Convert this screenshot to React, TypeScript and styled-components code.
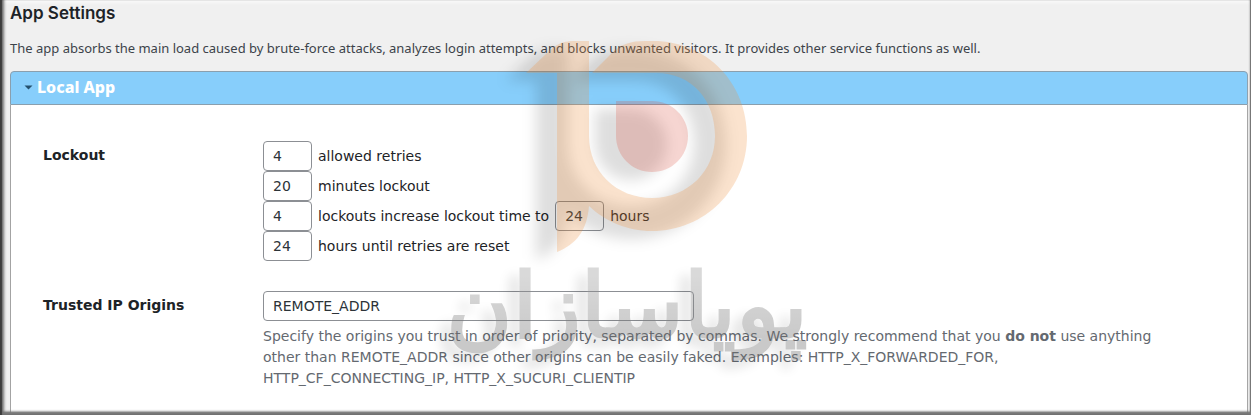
import React, { useState } from "react";
import styled, { createGlobalStyle } from "styled-components";

const GlobalStyle = createGlobalStyle`
  *, *::before, *::after { box-sizing: border-box; }
  body {
    margin: 0;
    background: #f0f0f0;
    color: #1d2327;
    font-family: "DejaVu Sans", sans-serif;
    font-size: 14px;
  }
`;

const Page = styled.main`
  position: relative;
  display: flex;
  flex-direction: column;
  min-height: 100vh;
  padding: 0 3px 0 10px;
  overflow: hidden;
`;

const Frame = styled.div`
  position: absolute;
  inset: 0;
  pointer-events: none;
  border-right: 1px solid #777;
  box-shadow:
    inset 2px 0 1px #3c3c3c,
    inset 0 -3px 2px #777,
    inset 4px -3px 3px #6f6f6f,
    inset 0 3px 3px #f8f8f8;
`;

const Title = styled.h1`
  margin: 3px 0 0;
  font: 600 17px/20px Inter, sans-serif;
`;

const Intro = styled.p`
  margin: 15px 0 12px;
  color: #3c434a;
  font: 400 13px/21px "Noto Sans", sans-serif;
`;

const Panel = styled.section`
  flex: 1;
  display: flex;
  flex-direction: column;
`;

const PanelHeading = styled.h2`
  margin: 0;
  font-size: 14px;
`;

const PanelToggle = styled.button`
  display: flex;
  align-items: center;
  gap: 4px;
  width: 100%;
  height: 34px;
  padding: 0 13px 2px;
  border: 1px solid #8a9fae;
  border-radius: 4px 4px 0 0;
  background: #87cefb;
  color: #fff;
  font: 800 16px/20px "Noto Sans", sans-serif;
  text-align: left;
  cursor: pointer;
`;

const Caret = styled.svg`
  width: 9px;
  height: 5px;
  fill: #24506e;
`;

const PanelBody = styled.form`
  flex: 1;
  display: flex;
  flex-direction: column;
  gap: 30px;
  padding: 36px 80px 26px 32px;
  border: 1px solid #a3a3a3;
  border-top: 0;
  border-bottom: 0;
  background: #fff;
`;

const SettingRow = styled.div`
  display: grid;
  grid-template-columns: 220px minmax(0, 1fr);
`;

const SettingName = styled.div`
  padding-top: 4px;
  font-weight: 700;
  line-height: 20px;
`;

const Line = styled.div`
  display: flex;
  align-items: center;
  gap: 6px;
  height: 30px;
`;

const TextField = styled.input<{ $wide?: boolean }>`
  width: ${(p) => (p.$wide ? "431px" : "49px")};
  max-width: 100%;
  height: 30px;
  padding: 0 9px;
  border: 1px solid #8c8f94;
  border-radius: 4px;
  background: #fff;
  color: #2c3338;
  font: inherit;
`;

const Help = styled.p`
  max-width: 910px;
  margin: 5px 0 0;
  color: #646970;
  line-height: 21px;
`;

const Watermark = styled.svg`
  position: absolute;
  top: 0;
  left: calc(50% - 200px);
  width: 400px;
  height: 415px;
  pointer-events: none;
`;

const emblem =
  "M525 73L545 54C555 44 562 41 572 41H588V136C588 172 616 198 651 198C687 198 714 171 714 136C714 100 691 73 655 73H591L611 53C620 44 630 41 644 41H652C706 41 746 83 746 136C746 189 704 231 651 231C626 231 604 221 588 206C586 230 576 244 556 252V73Z";
const drop =
  "M615 101H651C671 101 687 117 687 136C687 156 671 172 651 172C631 172 615 156 615 136Z";

function Brand() {
  return (
    <Watermark viewBox="425 0 400 415" aria-hidden="true">
      <defs>
        <filter id="soft" x="-20%" y="-20%" width="140%" height="140%">
          <feGaussianBlur stdDeviation="7" />
        </filter>
        <filter id="cast" x="-20%" y="-20%" width="140%" height="150%">
          <feDropShadow dx="-10" dy="8" stdDeviation="6" floodColor="#000" floodOpacity="0.3" />
        </filter>
        <linearGradient id="silver" x1="0" y1="0" x2="0" y2="1">
          <stop offset="0.2" stopColor="#999" />
          <stop offset="0.8" stopColor="#6c6c6c" />
        </linearGradient>
      </defs>
      <g filter="url(#soft)" fill="#000" fillOpacity="0.13" transform="translate(-21 8)">
        <path d={emblem} />
        <path d={drop} />
      </g>
      <path d={emblem} fill="#ee8e3b" fillOpacity="0.25" />
      <path d={drop} fill="#dc4633" fillOpacity="0.22" />
      <g opacity="0.36">
        <text
          x="626"
          y="337"
          textAnchor="middle"
          direction="rtl"
          fontFamily="DejaVu Sans, sans-serif"
          fontSize="90"
          fill="url(#silver)"
          stroke="url(#silver)"
          strokeWidth="3"
          filter="url(#cast)"
        >
          پویاسازان
        </text>
      </g>
    </Watermark>
  );
}

function NumberLine({ id, value, children }: { id: string; value: string; children: React.ReactNode }) {
  return (
    <Line>
      <TextField id={id} defaultValue={value} inputMode="numeric" />
      {children}
    </Line>
  );
}

export default function App() {
  const [open, setOpen] = useState(true);
  return (
    <Page>
      <GlobalStyle />
      <Title>App Settings</Title>
      <Intro>
        The app absorbs the main load caused by brute-force attacks, analyzes login attempts, and
        blocks unwanted visitors. It provides other service functions as well.
      </Intro>
      <Panel>
        <PanelHeading>
          <PanelToggle type="button" aria-expanded={open} onClick={() => setOpen(!open)}>
            <Caret viewBox="0 0 9 5" aria-hidden="true">
              <path d="M0.500 0.500H8.500L4.500 4.500Z" />
            </Caret>
            Local App
          </PanelToggle>
        </PanelHeading>
        {open && (
          <PanelBody>
            <SettingRow role="group" aria-labelledby="lockout">
              <SettingName id="lockout">Lockout</SettingName>
              <div>
                <NumberLine id="retries" value="4">
                  <label htmlFor="retries">allowed retries</label>
                </NumberLine>
                <NumberLine id="minutes" value="20">
                  <label htmlFor="minutes">minutes lockout</label>
                </NumberLine>
                <NumberLine id="lockouts" value="4">
                  <label htmlFor="lockouts">lockouts increase lockout time to</label>
                  <TextField id="hours" defaultValue="24" inputMode="numeric" />
                  <label htmlFor="hours">hours</label>
                </NumberLine>
                <NumberLine id="reset" value="24">
                  <label htmlFor="reset">hours until retries are reset</label>
                </NumberLine>
              </div>
            </SettingRow>
            <SettingRow>
              <SettingName as="label" htmlFor="origins">
                Trusted IP Origins
              </SettingName>
              <div>
                <Line>
                  <TextField id="origins" $wide defaultValue="REMOTE_ADDR" />
                </Line>
                <Help>
                  Specify the origins you trust in order of priority, separated by commas. We
                  strongly recommend that you <strong>do not</strong> use anything other than
                  REMOTE_ADDR since other origins can be easily faked. Examples:
                  HTTP_X_FORWARDED_FOR, HTTP_CF_CONNECTING_IP, HTTP_X_SUCURI_CLIENTIP
                </Help>
              </div>
            </SettingRow>
          </PanelBody>
        )}
      </Panel>
      <Brand />
      <Frame />
    </Page>
  );
}
